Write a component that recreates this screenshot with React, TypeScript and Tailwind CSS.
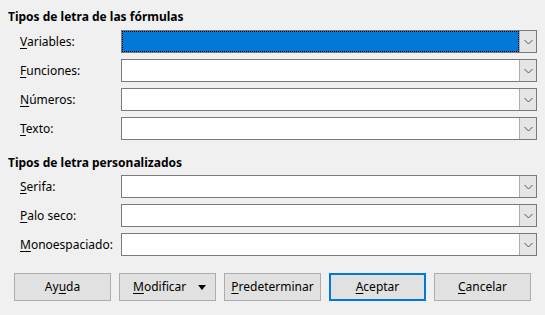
import React from "react";

function Mn({ text, i }: { text: string; i: number }) {
  return (
    <>
      {text.slice(0, i)}
      <span className="underline underline-offset-2">{text[i]}</span>
      {text.slice(i + 1)}
    </>
  );
}

function Chevron() {
  return (
    <svg width="9" height="6" viewBox="0 0 9 6" fill="none">
      <path d="M0.5 1l4 4 4-4" stroke="#555" strokeWidth="1" />
    </svg>
  );
}

function Combo({ focused }: { focused?: boolean }) {
  return (
    <div className="flex h-[23px] flex-1 border border-[#7a7a7a] bg-white">
      {focused ? (
        <div className="flex-1 border border-dotted border-black bg-[#0078d7]" />
      ) : (
        <div className="flex-1" />
      )}
      <div className="flex w-[17px] items-center justify-center border-l border-[#adadad] bg-[#e5e5e5]">
        <Chevron />
      </div>
    </div>
  );
}

function Row({ label, i, focused }: { label: string; i: number; focused?: boolean }) {
  return (
    <div className="flex items-center">
      <div className="w-[113px] shrink-0 pl-[12px] text-[12px]">
        <Mn text={label} i={i} />
      </div>
      <Combo focused={focused} />
    </div>
  );
}

function Btn({ children, primary }: { children: React.ReactNode; primary?: boolean }) {
  return (
    <div
      className={
        primary
          ? "flex h-[28px] w-[97px] items-center justify-center border-2 border-[#0078d7] bg-[#e1e1e1] text-[12px]"
          : "flex h-[28px] w-[97px] items-center justify-center border border-[#adadad] bg-[#e1e1e1] text-[12px]"
      }
    >
      {children}
    </div>
  );
}

export default function App() {
  return (
    <div
      className="h-[315px] w-[545px] bg-[#f0f0f0] px-[8px] text-black"
      style={{ fontFamily: '"Noto Sans", "Open Sans", sans-serif' }}
    >
      <div className="pt-[9px] text-[12px] font-bold leading-[16px]">Tipos de letra de las fórmulas</div>
      <div className="mt-[5px] flex flex-col gap-[6px]">
        <Row label="Variables:" i={0} focused />
        <Row label="Funciones:" i={0} />
        <Row label="Números:" i={0} />
        <Row label="Texto:" i={0} />
      </div>
      <div className="mt-[15px] text-[12px] font-bold leading-[16px]">Tipos de letra personalizados</div>
      <div className="mt-[4px] flex flex-col gap-[6px]">
        <Row label="Serifa:" i={0} />
        <Row label="Palo seco:" i={0} />
        <Row label="Monoespaciado:" i={0} />
      </div>
      <div className="ml-[6px] mt-[17px] flex gap-[8px]">
        <Btn>
          <Mn text="Ayuda" i={2} />
        </Btn>
        <div className="flex h-[28px] w-[97px] items-center border border-[#adadad] bg-[#e1e1e1] pl-[13px] text-[12px]">
          <span className="flex-1">
            <Mn text="Modificar" i={0} />
          </span>
          <svg width="8" height="5" viewBox="0 0 8 5" className="mr-[9px]">
            <path d="M0 0h8L4 5z" fill="#000" />
          </svg>
        </div>
        <Btn>
          <Mn text="Predeterminar" i={0} />
        </Btn>
        <Btn primary>
          <Mn text="Aceptar" i={0} />
        </Btn>
        <Btn>
          <Mn text="Cancelar" i={0} />
        </Btn>
      </div>
    </div>
  );
}
